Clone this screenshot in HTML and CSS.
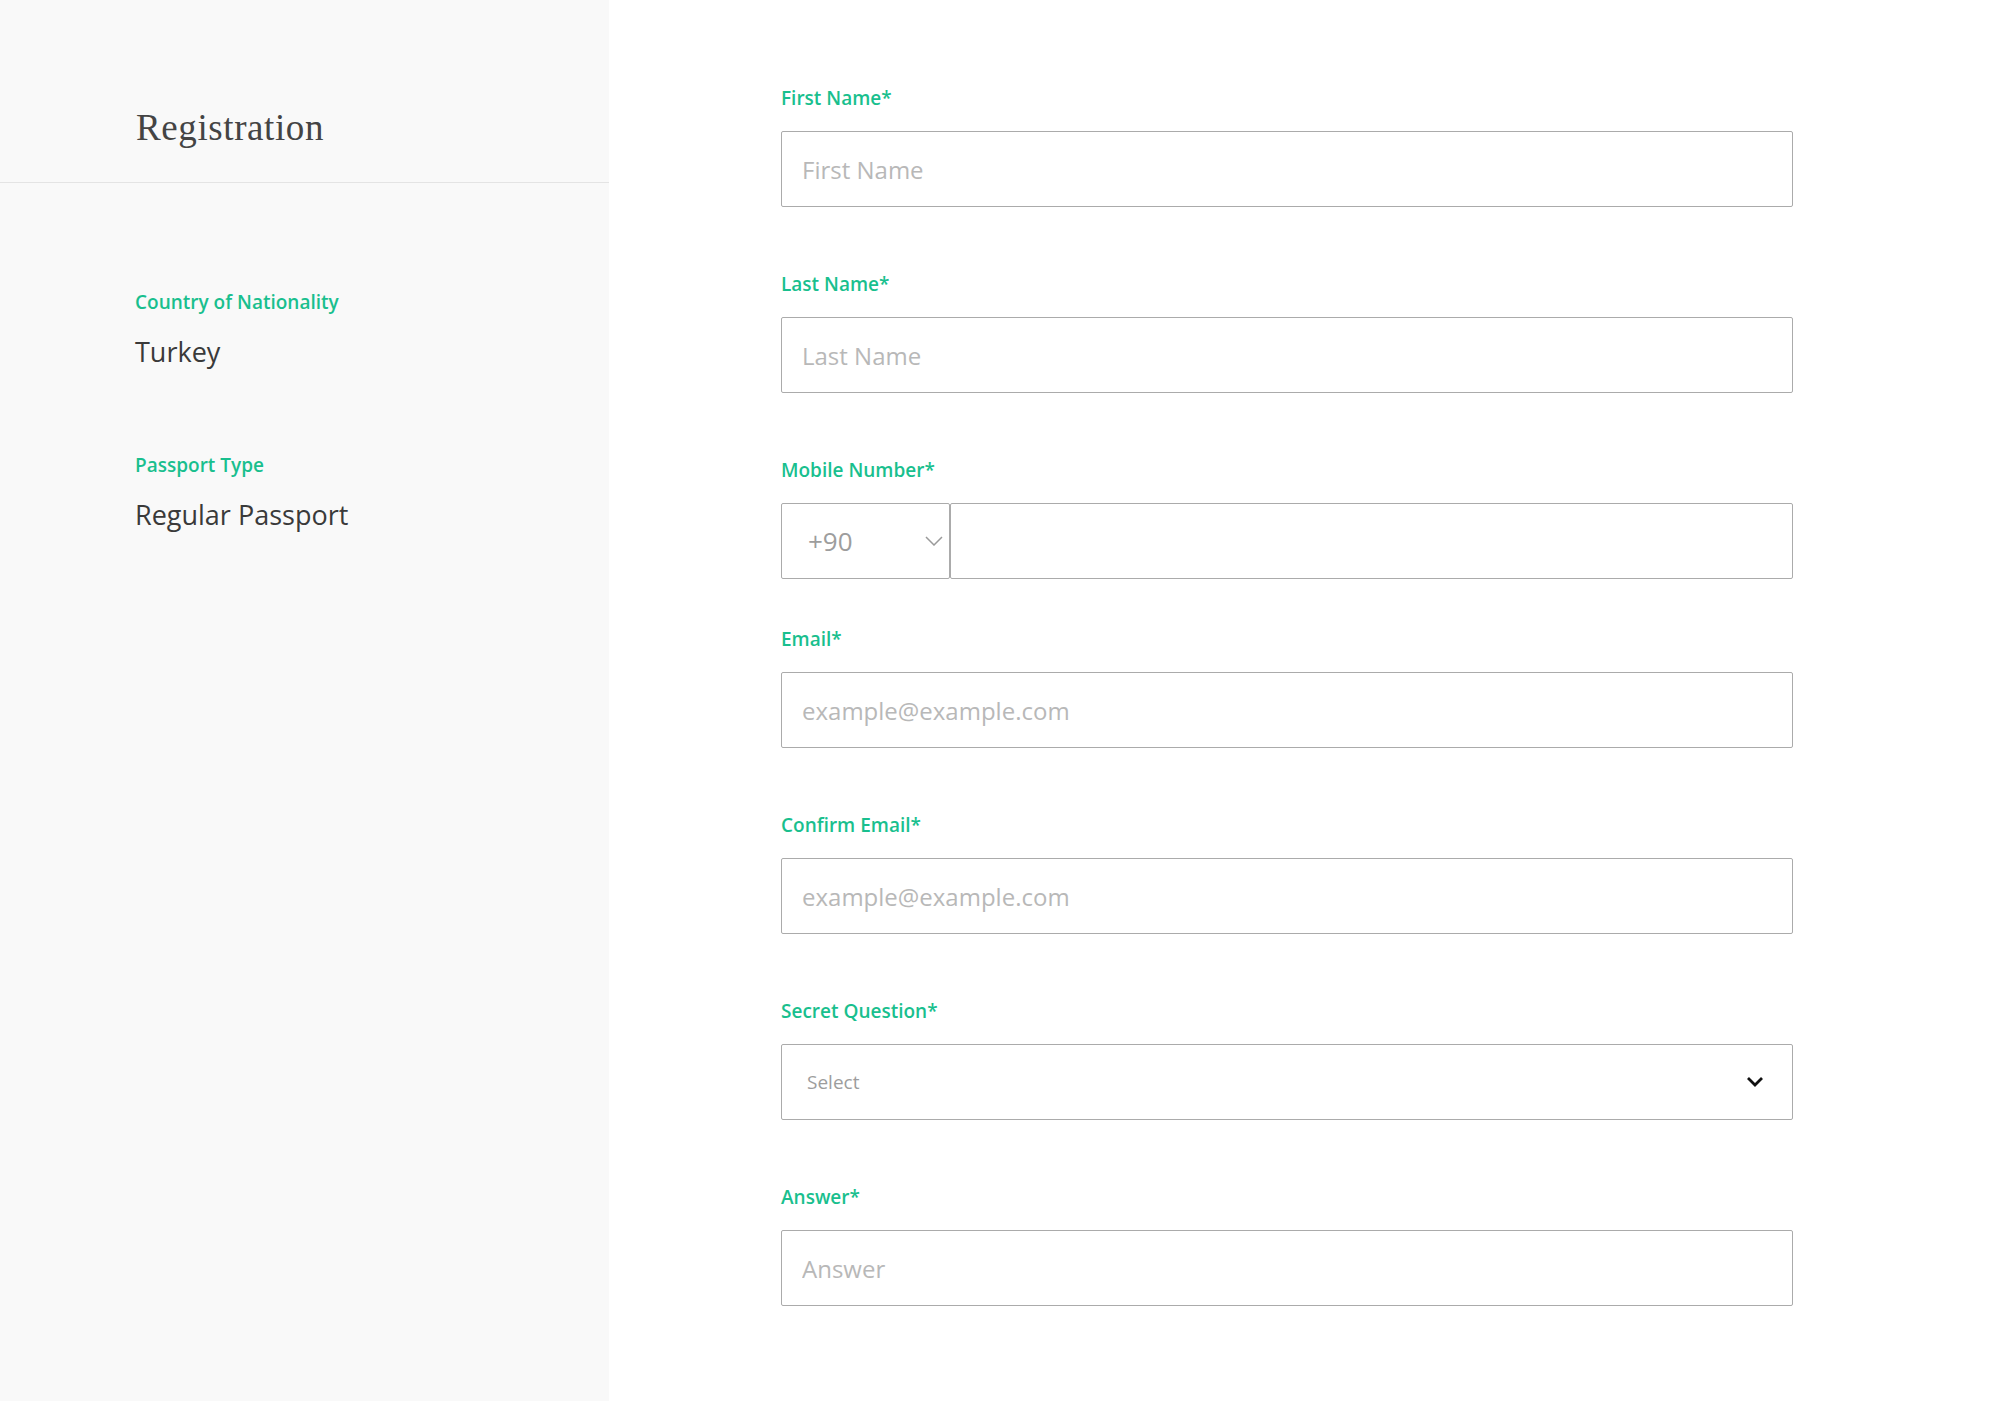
FILE: index.html
```html
<!DOCTYPE html>
<html lang="en">
<head>
<meta charset="utf-8">
<title>Registration</title>
<link rel="stylesheet" href="styles.css">
</head>
<body>
<div class="page">
  <aside class="sidebar">
    <div class="sidebar-header">
      <h1 class="title">Registration</h1>
    </div>
    <div class="sidebar-body">
      <div class="info">
        <div class="info-label">Country of Nationality</div>
        <div class="info-value">Turkey</div>
      </div>
      <div class="info">
        <div class="info-label">Passport Type</div>
        <div class="info-value">Regular Passport</div>
      </div>
    </div>
  </aside>
  <main class="main">
    <form class="form">
      <div class="field">
        <label class="label">First Name*</label>
        <input class="input" type="text" placeholder="First Name">
      </div>
      <div class="field">
        <label class="label">Last Name*</label>
        <input class="input" type="text" placeholder="Last Name">
      </div>
      <div class="field field-mobile">
        <label class="label">Mobile Number*</label>
        <div class="phone-row">
          <div class="code-select">
            <span class="code-text">+90</span>
            <svg class="chev-thin" width="18" height="10" viewBox="0 0 18 10"><path d="M1 1 L9 9 L17 1" fill="none" stroke="#9a9a9a" stroke-width="1.5"/></svg>
          </div>
          <input class="input phone-input" type="text">
        </div>
      </div>
      <div class="field">
        <label class="label">Email*</label>
        <input class="input" type="text" placeholder="example@example.com">
      </div>
      <div class="field">
        <label class="label">Confirm Email*</label>
        <input class="input" type="text" placeholder="example@example.com">
      </div>
      <div class="field">
        <label class="label">Secret Question*</label>
        <div class="select">
          <span class="select-text">Select</span>
          <svg class="chev-bold" width="18" height="12" viewBox="0 0 18 12"><path d="M2 2 L9 9 L16 2" fill="none" stroke="#111" stroke-width="2.8"/></svg>
        </div>
      </div>
      <div class="field">
        <label class="label">Answer*</label>
        <input class="input" type="text" placeholder="Answer">
      </div>
    </form>
  </main>
</div>
</body>
</html>
```

FILE: styles.css
```css
* { box-sizing: border-box; }
html, body { margin: 0; padding: 0; }
body {
  font-family: "Open Sans", "Liberation Sans", sans-serif;
  color: #3a3a3a;
  background: #ffffff;
}
.page {
  display: flex;
  min-height: 100vh;
}
.sidebar {
  width: 609px;
  flex: 0 0 609px;
  background: #f9f9f9;
  min-height: 1401px;
}
.sidebar-header {
  height: 183px;
  border-bottom: 1px solid #e4e4e4;
  padding-left: 136px;
  padding-top: 103px;
}
.title {
  margin: 0;
  font-family: "Liberation Serif", "DejaVu Serif", serif;
  font-weight: normal;
  font-size: 37px;
  line-height: 50px;
  letter-spacing: 0.6px;
  color: #444444;
}
.sidebar-body {
  padding-left: 135px;
  padding-top: 106px;
  display: flex;
  flex-direction: column;
  gap: 82px;
}
.info-label {
  font-size: 19px;
  font-weight: 600;
  line-height: 26px;
  color: #19bf8e;
}
.info-value {
  margin-top: 19px;
  font-size: 27px;
  line-height: 36px;
  color: #3a3a3a;
}
.main {
  flex: 1;
  padding-left: 172px;
  padding-top: 85px;
}
.form {
  width: 1012px;
  display: flex;
  flex-direction: column;
}
.field {
  display: flex;
  flex-direction: column;
  margin-bottom: 64px;
}
.field-mobile {
  margin-bottom: 47px;
}
.label {
  font-size: 19px;
  font-weight: 600;
  line-height: 26px;
  color: #19bf8e;
  margin-bottom: 20px;
}
.input {
  height: 76px;
  width: 100%;
  border: 1px solid #ababab;
  border-radius: 2px;
  background: #fff;
  padding: 0 20px;
  font-family: "Open Sans", "Liberation Sans", sans-serif;
  font-size: 24px;
  color: #3a3a3a;
  outline: none;
}
.input::placeholder {
  color: #b8b8b8;
  opacity: 1;
}
.phone-row {
  display: flex;
}
.code-select {
  width: 169px;
  flex: 0 0 169px;
  height: 76px;
  border: 1px solid #ababab;
  border-radius: 2px;
  display: flex;
  align-items: center;
  justify-content: space-between;
  padding: 0 6px 0 26px;
}
.code-text {
  font-size: 26px;
  color: #9d9d9d;
}
.chev-thin {
  display: block;
}
.phone-input {
  flex: 1;
}
.select {
  height: 76px;
  border: 1px solid #ababab;
  border-radius: 2px;
  display: flex;
  align-items: center;
  justify-content: space-between;
  padding: 0 28px 0 25px;
}
.select-text {
  font-size: 19px;
  color: #9d9d9d;
}
.chev-bold {
  display: block;
}
```
